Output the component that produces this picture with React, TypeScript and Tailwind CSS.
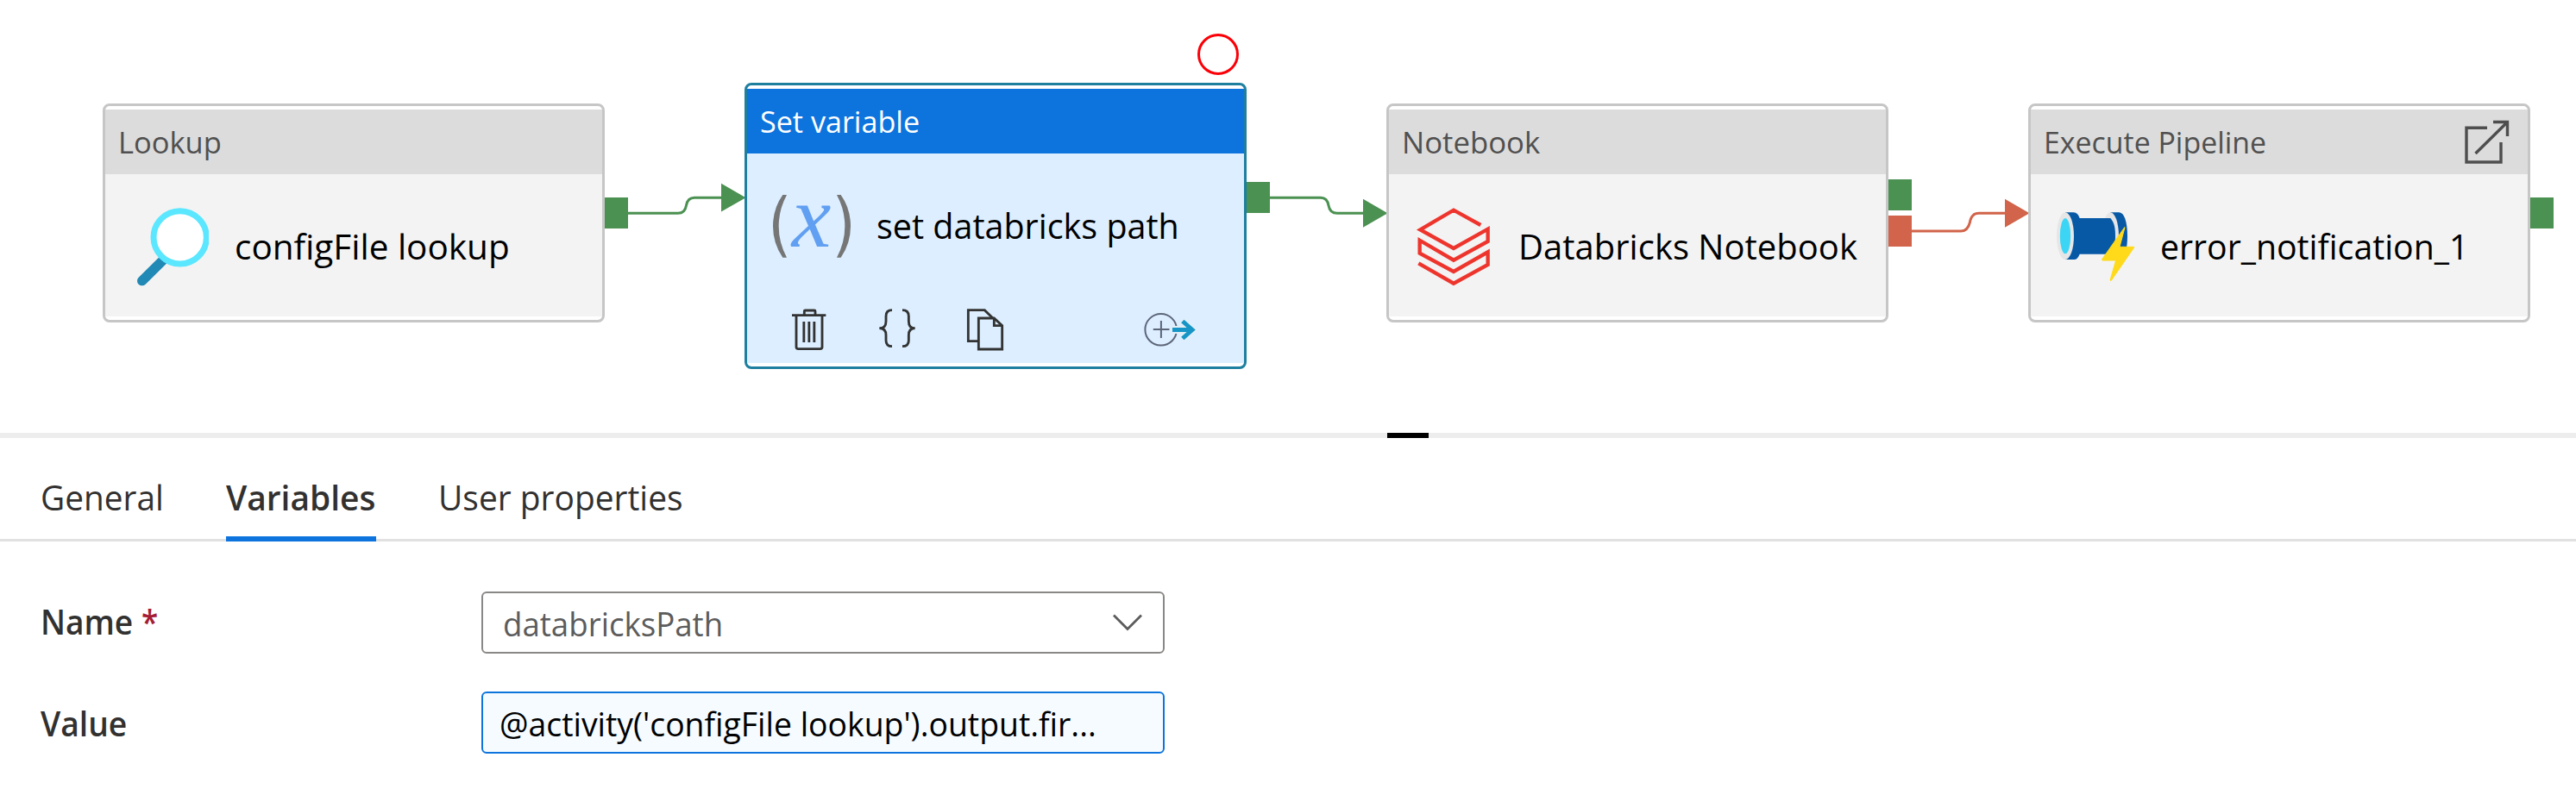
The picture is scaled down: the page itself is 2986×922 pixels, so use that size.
import type { ReactNode } from "react";
import clsx from "clsx";

type CardProps = {
  kind: string;
  kindClass: string;
  title: string;
  titleClass: string;
  icon: ReactNode;
  className: string;
  selected?: boolean;
  action?: ReactNode;
  footer?: ReactNode;
};

function ActivityCard({ kind, kindClass, title, titleClass, icon, className, selected, action, footer }: CardProps) {
  return (
    <div
      className={clsx(
        "absolute flex w-[582px] flex-col rounded-lg border-[3px] bg-white py-1",
        selected ? "border-[#1f7f9f]" : "border-[#c6c6c6]",
        className,
      )}
    >
      <div
        className={clsx(
          "flex h-[75px] shrink-0 items-center justify-between pr-[18px] pl-[14.5px] text-[35px] leading-[75px]",
          selected ? "bg-[#0d74dd] text-white" : "bg-[#dcdcdc] text-[#505050]",
        )}
      >
        <span className={clsx("inline-block origin-left whitespace-nowrap", kindClass)}>{kind}</span>
        {action}
      </div>
      <div className={clsx("flex-1", selected ? "bg-[#dceeff]" : "bg-[#f3f3f3]")}>
        <div className="flex h-[165px] items-center pl-7">
          {icon}
          <span
            className={clsx(
              "ml-3 inline-block origin-left text-[41px] leading-[56px] whitespace-nowrap text-black",
              titleClass,
            )}
          >
            {title}
          </span>
        </div>
        {footer}
      </div>
    </div>
  );
}

function LookupIcon() {
  return (
    <svg viewBox="0 0 330 357" className="h-[119px] w-[110px] shrink-0">
      <path d="M44 302 L116 231" stroke="#2189b5" strokeWidth="34" strokeLinecap="round" />
      <clipPath id="lens">
        <rect x="0" y="0" width="276" height="357" />
      </clipPath>
      <circle cx="176" cy="151" r="92" fill="#fff" stroke="#5ae7ff" strokeWidth="21" clipPath="url(#lens)" />
    </svg>
  );
}

function VariableIcon() {
  return (
    <svg viewBox="642 543 330 357" className="h-[119px] w-[110px] shrink-0 overflow-visible">
      <path d="M682 618 H696 Q668 670 668 727 T696 836 H682 Q648 788 648 727 T682 618 Z" fill="#767676" />
      <path d="M884 618 H870 Q898 670 898 727 T870 836 H884 Q918 788 918 727 T884 618 Z" fill="#767676" />
      <text x="713" y="799" fontSize="308" fill="#619ff2" fontFamily="'Liberation Serif', serif" fontStyle="italic">
        x
      </text>
    </svg>
  );
}

function DatabricksIcon() {
  return (
    <svg viewBox="24 0 330 357" className="h-[119px] w-[110px] shrink-0">
      <path
        d="M259 108 L165 56 L49 124 L165 189 L284 122 V165 L165 230 L47 161 V206 L165 270 L284 202 V246 L165 311 L43 241"
        fill="none"
        stroke="#ee352d"
        strokeWidth="13"
      />
    </svg>
  );
}

function PipelineIcon() {
  return (
    <svg viewBox="21 0 330 357" className="h-[119px] w-[110px] shrink-0">
      <path d="M214 64 H243 C263 64 273 100 273 146 S263 228 243 228 H214 Z" fill="#0759a6" />
      <ellipse cx="214" cy="146" rx="29" ry="82" fill="#e6e6e6" />
      <path d="M90 84 H214 C228 100 231 120 231 147 S225 195 215 209 H90 Z" fill="#0759a6" />
      <path d="M57 64 H85 C97 64 103 74 107 84 V209 C102 222 96 228 88 228 H57 Z" fill="#0759a6" />
      <ellipse cx="57" cy="146" rx="30" ry="82" fill="#e6e6e6" />
      <ellipse cx="57" cy="146" rx="18.5" ry="62" fill="#3dd5f5" />
      <path
        d="M263 116 L185 227 Q184 230 187 231 H233 L213 300 Q214 302 217 301 L296 186 Q297 184 295 184 H246 L264 116 Z"
        fill="#ffda1a"
        stroke="#ffda1a"
        strokeWidth="3"
        strokeLinejoin="round"
      />
    </svg>
  );
}

function OpenIcon() {
  return (
    <svg viewBox="2854 136 58 56" className="h-[56px] w-[58px]" fill="none" stroke="#4e4e4e" strokeWidth="3.4">
      <path d="M2883 147.2 H2859 V187 H2899 V164" />
      <path d="M2890 140.5 H2906.5 V157 M2906 141 L2869.5 177" />
    </svg>
  );
}

function CardTools() {
  return (
    <div className="flex h-[78px] items-center pr-[53px] pl-12">
      <div className="flex flex-1 items-center gap-[54px]">
        <svg viewBox="702 1014 144 144" className="size-12 overflow-visible" fill="none" stroke="#333" strokeWidth="8.5">
          <path d="M714 1037 H832" />
          <path d="M757 1037 V1023 Q757 1020 760 1020 H792 Q795 1020 795 1023 V1037" />
          <path d="M729 1040 V1147 Q729 1154 736 1154 H812 Q819 1154 819 1147 V1040" />
          <path d="M755.5 1059 V1131 M773.5 1059 V1131 M791.5 1059 V1131" />
        </svg>
        <svg viewBox="1008 1014 144 144" className="size-12 overflow-visible" fill="none" stroke="#333" strokeWidth="8.5">
          <path d="M1062 1019 C1046 1019 1041 1028 1041 1040 V1058 C1041 1072 1034 1082 1018 1082 C1034 1082 1041 1092 1041 1106 V1124 C1041 1137 1046 1145 1062 1145" />
          <path d="M1098 1019 C1114 1019 1120 1028 1120 1040 V1058 C1120 1072 1126 1082 1142 1082 C1126 1082 1120 1092 1120 1106 V1124 C1120 1137 1114 1145 1098 1145" />
        </svg>
        <svg viewBox="1314 1014 144 144" className="size-12 overflow-visible" fill="none" stroke="#333" strokeWidth="8.5">
          <path d="M1363 1127 H1327 V1019 H1384 L1412 1046" />
          <path d="M1363 1047 H1417 L1445 1073 V1155 H1363 Z" />
          <path d="M1417 1047 V1073 H1445" />
        </svg>
      </div>
      <svg viewBox="1325 358 64 48" className="h-12 w-16" fill="none">
        <circle cx="1345.7" cy="382.3" r="18.3" stroke="#5d6579" strokeWidth="2" />
        <path d="M1336.8 382 H1355.5 M1345.9 372 V392" stroke="#5d6579" strokeWidth="2" />
        <path d="M1358 382.5 H1383 M1370.5 372 L1382 382.5 L1370.5 393" stroke="#e3eef5" strokeWidth="9" />
        <path d="M1359 382.5 H1382 M1370.8 372.5 L1382 382.5 L1370.8 392.5" stroke="#1795c6" strokeWidth="5" />
      </svg>
    </div>
  );
}

function Connectors() {
  return (
    <svg viewBox="0 0 2986 502" className="absolute inset-0 h-[502px] w-[2986px]" fill="none">
      <g stroke="#4b9152" strokeWidth="3">
        <path d="M728 247.3 H786 Q794 247.3 795.5 238.2 Q797 229.2 805 229.2 H838" />
        <path d="M1472 229.2 H1531 Q1538.5 229.2 1540 238.2 Q1541.5 247.3 1550 247.3 H1582" />
      </g>
      <path d="M2216 268 H2273 Q2281 268 2283.5 257.6 Q2285 247.3 2294 247.3 H2326" stroke="#d1644a" strokeWidth="3" />
      <g fill="#4b9152">
        <path d="M836 212.7 L864.5 229.2 L836 245.6 Z" />
        <path d="M1580 230.8 L1608.5 247.3 L1580 263.7 Z" />
        <rect x="700" y="229" width="28" height="36" />
        <rect x="1444" y="211" width="28" height="36" />
        <rect x="2188" y="208" width="28" height="36" />
        <rect x="2932" y="229" width="28" height="36" />
      </g>
      <g fill="#d1644a">
        <path d="M2324 230.8 L2352.5 247.3 L2324 263.7 Z" />
        <rect x="2188" y="250" width="28" height="36" />
      </g>
    </svg>
  );
}

function Canvas() {
  return (
    <section className="relative h-[502px] overflow-hidden">
      <Connectors />
      <ActivityCard
        className="top-[120px] left-[119px] h-[254px]"
        kind="Lookup"
        kindClass="scale-x-[0.985]"
        title="configFile lookup"
        titleClass="scale-x-[0.987]"
        icon={<LookupIcon />}
      />
      <ActivityCard
        selected
        className="top-[96px] left-[863px] h-[332px]"
        kind="Set variable"
        kindClass="scale-x-[0.975]"
        title="set databricks path"
        titleClass="scale-x-[0.963]"
        icon={<VariableIcon />}
        footer={<CardTools />}
      />
      <div className="absolute top-[39px] left-[1388px] size-12 rounded-full border-[3px] border-[#fb0007]" />
      <ActivityCard
        className="top-[120px] left-[1607px] h-[254px]"
        kind="Notebook"
        kindClass="scale-x-[0.992]"
        title="Databricks Notebook"
        titleClass="scale-x-[0.976]"
        icon={<DatabricksIcon />}
      />
      <ActivityCard
        className="top-[120px] left-[2351px] h-[254px]"
        kind="Execute Pipeline"
        kindClass="scale-x-[0.968]"
        title="error_notification_1"
        titleClass="scale-x-[0.957]"
        icon={<PipelineIcon />}
        action={<OpenIcon />}
      />
    </section>
  );
}

function Tabs() {
  const base = "h-[79px] border-b-[6px] whitespace-nowrap -mb-[3px]";
  return (
    <nav className="flex h-[120px] items-end gap-[70px] border-b-[3px] border-[#e1e1e1] pl-[47px] text-[40px] leading-[55px] text-[#323130]">
      <div className={clsx(base, "w-[145px] border-transparent")}>
        <span className="inline-block origin-left scale-x-[0.970]">General</span>
      </div>
      <div className={clsx(base, "w-[174px] border-[#0d74dd] font-semibold")}>
        <span className="inline-block origin-left scale-x-[0.972]">Variables</span>
      </div>
      <div className={clsx(base, "border-transparent pl-0.5")}>
        <span className="inline-block origin-left scale-x-[0.973]">User properties</span>
      </div>
    </nav>
  );
}

function Form() {
  return (
    <div className="flex flex-col gap-11 pt-[58px] pl-[47px] text-[39px] leading-[54px]">
      <div className="flex h-[72px] items-center">
        <div className="w-[511px] pb-0.5 font-semibold text-[#323130]">
          <span className="inline-block w-[117px] origin-left scale-x-[0.950]">Name</span>
          <span className="inline-block origin-left scale-x-[0.9] text-[#a61c33]">*</span>
        </div>
        <div className="flex h-[72px] w-[792px] items-center justify-between rounded-md border-2 border-[#8a8886] pt-0.5 pr-6 pl-[23px] text-[#5c5c5c]">
          <span className="inline-block origin-left scale-x-[0.940]">databricksPath</span>
          <svg viewBox="0 0 34 20" className="mb-0.5 h-5 w-[34px]" fill="none" stroke="#5c5c5c" strokeWidth="2.8">
            <path d="M1 1.5 L17 17.5 L33 1.5" />
          </svg>
        </div>
      </div>
      <div className="flex h-[72px] items-center">
        <div className="w-[511px] pt-px font-semibold text-[#323130]">
          <span className="inline-block origin-left scale-x-[0.955]">Value</span>
        </div>
        <div className="flex h-[72px] w-[792px] items-center rounded-md border-2 border-[#0d74dd] bg-[#f5fbff] pt-px pl-[19px] text-black">
          <span className="inline-block origin-left scale-x-[0.958] whitespace-nowrap">
            @activity('configFile lookup').output.fir...
          </span>
        </div>
      </div>
    </div>
  );
}

export default function App() {
  return (
    <main className="h-[922px] w-[2986px] overflow-hidden bg-white font-[family-name:Open_Sans,Noto_Sans,sans-serif]">
      <Canvas />
      <div className="flex h-1.5 bg-[#ededed] pl-[1608px]">
        <div className="h-1.5 w-12 bg-black" />
      </div>
      <Tabs />
      <Form />
    </main>
  );
}
